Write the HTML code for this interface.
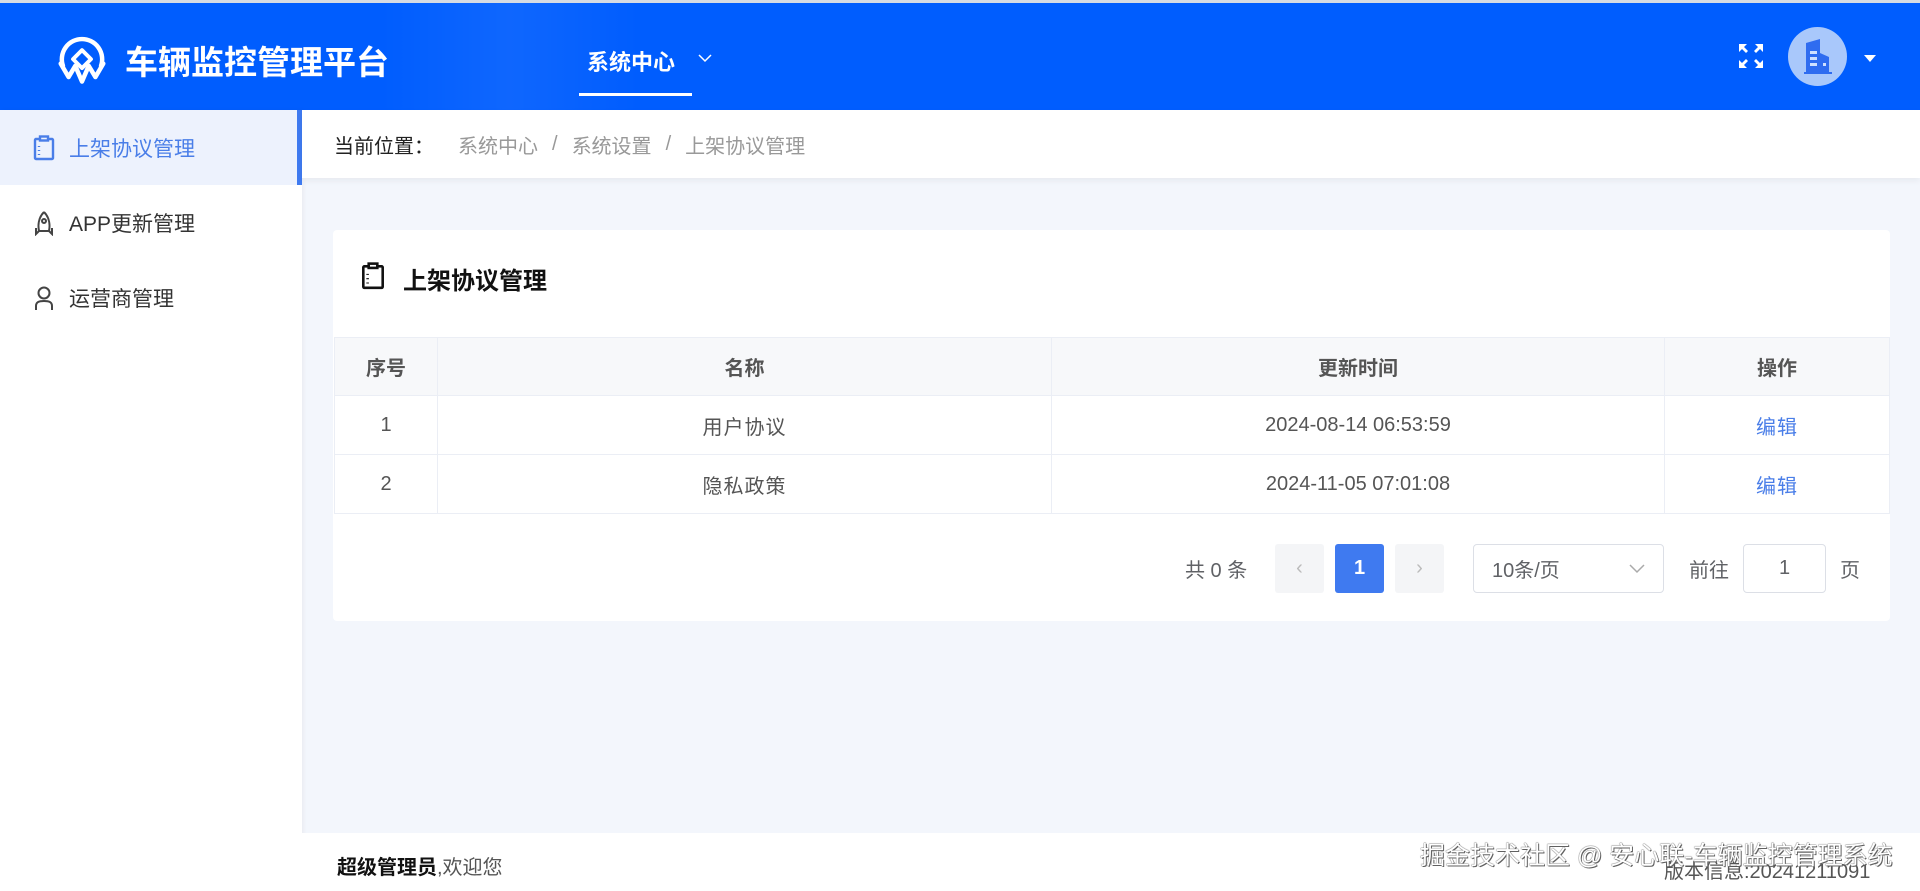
<!DOCTYPE html>
<html><head><meta charset="utf-8"><style>
*{margin:0;padding:0;box-sizing:border-box}
body{width:1920px;height:891px;overflow:hidden;background:#f3f6fc;font-family:"Liberation Sans","Noto Sans CJK SC",sans-serif;position:relative;color:#303133}
.hdr{position:absolute;left:0;top:0;width:1920px;height:110px;background:#005dfe;border-top:3px solid #d6dbe3}
.hdr .glow{position:absolute;left:380px;top:0;width:260px;height:110px;background:linear-gradient(90deg,rgba(255,255,255,0),rgba(255,255,255,.06),rgba(255,255,255,0))}
.title{position:absolute;left:125px;top:33px;font-size:33px;font-weight:bold;color:#fff}
.nav{position:absolute;left:587px;top:42px;font-size:22px;font-weight:bold;color:#fff}
.navline{position:absolute;left:579px;top:90px;width:113px;height:3px;background:#fff}
.side{position:absolute;left:0;top:110px;width:302px;height:781px;background:#fff;box-shadow:2px 0 4px rgba(0,0,0,.04)}
.item{position:absolute;left:0;width:302px;height:75px;font-size:21px;color:#333;display:flex;align-items:center}
.item span{position:absolute;left:69px}
.item svg{position:absolute;left:33px}
.active{background:#edf2fd;color:#4a7ee8;border-right:5px solid #3f7af0}
.bc{position:absolute;left:302px;top:110px;width:1618px;height:68px;background:#fff;box-shadow:0 3px 6px rgba(0,0,0,.05);font-size:20px;color:#999;display:flex;align-items:center;padding-left:32px}
.bc b{font-weight:normal;color:#222;margin-right:24px}
.bc i{font-style:normal;margin:0 14px}
.card{position:absolute;left:333px;top:230px;width:1557px;height:391px;background:#fff;border-radius:4px}
.ct{position:absolute;left:70px;top:31px;font-size:24px;font-weight:bold;color:#111}
table{position:absolute;left:1px;top:107px;width:1556px;border-collapse:collapse;font-size:20px;color:#555}
td,th{border:1px solid #ebeef5;text-align:center}
th{height:58px;background:#f7f8fa;font-weight:bold;color:#555}
td{height:59px}
.cj{letter-spacing:1px}
.edit{color:#4a7ee8}
.pg{position:absolute;top:314px;height:49px;display:flex;align-items:center;justify-content:center;font-size:20px;color:#606266}
.btn{background:#f4f5f7;border-radius:3px;color:#bbb}
.foot{position:absolute;left:302px;top:833px;width:1618px;height:58px;background:#fff}
</style></head><body>
<div class="hdr"><div class="glow"></div>
<svg style="position:absolute;left:56px;top:27px" width="52" height="56" viewBox="0 0 44 50" fill="none" stroke="#fff" stroke-width="4" stroke-linejoin="round" stroke-linecap="round">
<path d="M5 32 A18 18 0 1 1 39 32"/>
<path d="M3 30 L10 42 L16 32 L22 46 L28 32 L34 42 L41 30" />
<path d="M14 26 L22 18 L30 26 L22 34 Z" stroke-width="3.5"/>
</svg>
<div class="title">车辆监控管理平台</div>
<div class="nav">系统中心</div>
<svg style="position:absolute;left:698px;top:50px" width="14" height="10" viewBox="0 0 14 10"><path d="M1 2 L7 8 L13 2" stroke="#fff" stroke-width="1.5" fill="none"/></svg>
<div class="navline"></div>
<svg style="position:absolute;left:1738px;top:40px" width="26" height="26" viewBox="0 0 26 26" fill="#fff"><path d="M1 1h8l-3 3 4 4-2 2-4-4-3 3z M25 1v8l-3-3-4 4-2-2 4-4-3-3z M1 25v-8l3 3 4-4 2 2-4 4 3 3z M25 25h-8l3-3-4-4 2-2 4 4 3-3z"/></svg>
<div style="position:absolute;left:1788px;top:24px;width:59px;height:59px;border-radius:50%;background:#a9c8fb"></div>
<svg style="position:absolute;left:1800px;top:34px" width="36" height="40" viewBox="0 0 36 40"><path d="M6 36V6l14-4v34z" fill="#2f6cf0"/><path d="M20 16l9 4v16h-9z" fill="#2f6cf0"/><rect x="10" y="14" width="7" height="3" fill="#cfe0ff"/><rect x="10" y="20" width="7" height="3" fill="#cfe0ff"/><rect x="10" y="26" width="7" height="3" fill="#cfe0ff"/><rect x="23" y="26" width="3" height="3" fill="#cfe0ff"/><rect x="4" y="35" width="28" height="2" fill="#2f6cf0"/></svg>
<div style="position:absolute;left:1864px;top:52px;border-left:6px solid transparent;border-right:6px solid transparent;border-top:7px solid #fff"></div>
</div>
<div class="side">
<div class="item active" style="top:0"><svg width="22" height="26" viewBox="0 0 22 26" fill="none" stroke="#4a7ee8" stroke-width="2.4"><rect x="2" y="4" width="18" height="20" rx="1"/><rect x="7" y="1.5" width="8" height="4" fill="#edf2fd"/><path d="M6 11v1M6 15v1M6 19v1"/></svg><span>上架协议管理</span></div>
<div class="item" style="top:75px"><svg width="22" height="26" viewBox="0 0 22 26" fill="none" stroke="#444" stroke-width="2"><path d="M11 2C5 8 5 16 6 21L3 24 3 18 M11 2C17 8 17 16 16 21L19 24 19 18 M6 21H16"/><circle cx="11" cy="11" r="2"/></svg><span>APP更新管理</span></div>
<div class="item" style="top:150px"><svg width="22" height="26" viewBox="0 0 22 26" fill="none" stroke="#444" stroke-width="2"><circle cx="11" cy="8" r="5.5"/><path d="M3 25V21C3 17 6 16 11 16S19 17 19 21V25"/></svg><span>运营商管理</span></div>
</div>
<div class="bc"><b>当前位置：</b>系统中心<i>/</i>系统设置<i>/</i>上架协议管理</div>
<div class="card">
<svg style="position:absolute;left:28px;top:32px" width="24" height="28" viewBox="0 0 22 26" fill="none" stroke="#111" stroke-width="2.4"><rect x="2" y="4" width="18" height="20" rx="1"/><rect x="7" y="1.5" width="8" height="4" fill="#fff"/><path d="M6 11v1M6 15v1M6 19v1"/></svg>
<div class="ct">上架协议管理</div>
<table>
<tr><th style="width:103px">序号</th><th style="width:614px">名称</th><th style="width:613px">更新时间</th><th>操作</th></tr>
<tr><td>1</td><td class="cj">用户协议</td><td>2024-08-14 06:53:59</td><td class="edit cj">编辑</td></tr>
<tr><td>2</td><td class="cj">隐私政策</td><td>2024-11-05 07:01:08</td><td class="edit cj">编辑</td></tr>
</table>
<div class="pg" style="left:852px">共 0 条</div>
<div class="pg btn" style="left:942px;width:49px">‹</div>
<div class="pg" style="left:1002px;width:49px;background:#3f7af0;color:#fff;font-weight:bold;border-radius:3px">1</div>
<div class="pg btn" style="left:1062px;width:49px">›</div>
<div class="pg" style="left:1140px;width:191px;border:1px solid #dcdfe6;border-radius:4px;justify-content:flex-start;padding-left:18px">10条/页<svg style="position:absolute;right:18px;top:19px" width="16" height="10" viewBox="0 0 16 10"><path d="M1 1l7 7 7-7" stroke="#aaa" stroke-width="1.5" fill="none"/></svg></div>
<div class="pg" style="left:1356px">前往</div>
<div class="pg" style="left:1410px;width:83px;border:1px solid #dcdfe6;border-radius:4px">1</div>
<div class="pg" style="left:1507px">页</div>
</div>
<div class="foot">
<div style="position:absolute;left:35px;top:18px;font-size:20px;color:#111"><b>超级管理员</b><span style="color:#555">,欢迎您</span></div>
<div style="position:absolute;left:1362px;top:22px;font-size:20px;color:#555">版本信息:20241211091</div>
<div style="position:absolute;left:1118px;top:3px;font-size:25px;color:#fff;text-shadow:0 0 1px #555,0 0 1px #555,1px 1px 0 #666">掘金技术社区 @ 安心联-车辆监控管理系统</div>
</div>
</body></html>
